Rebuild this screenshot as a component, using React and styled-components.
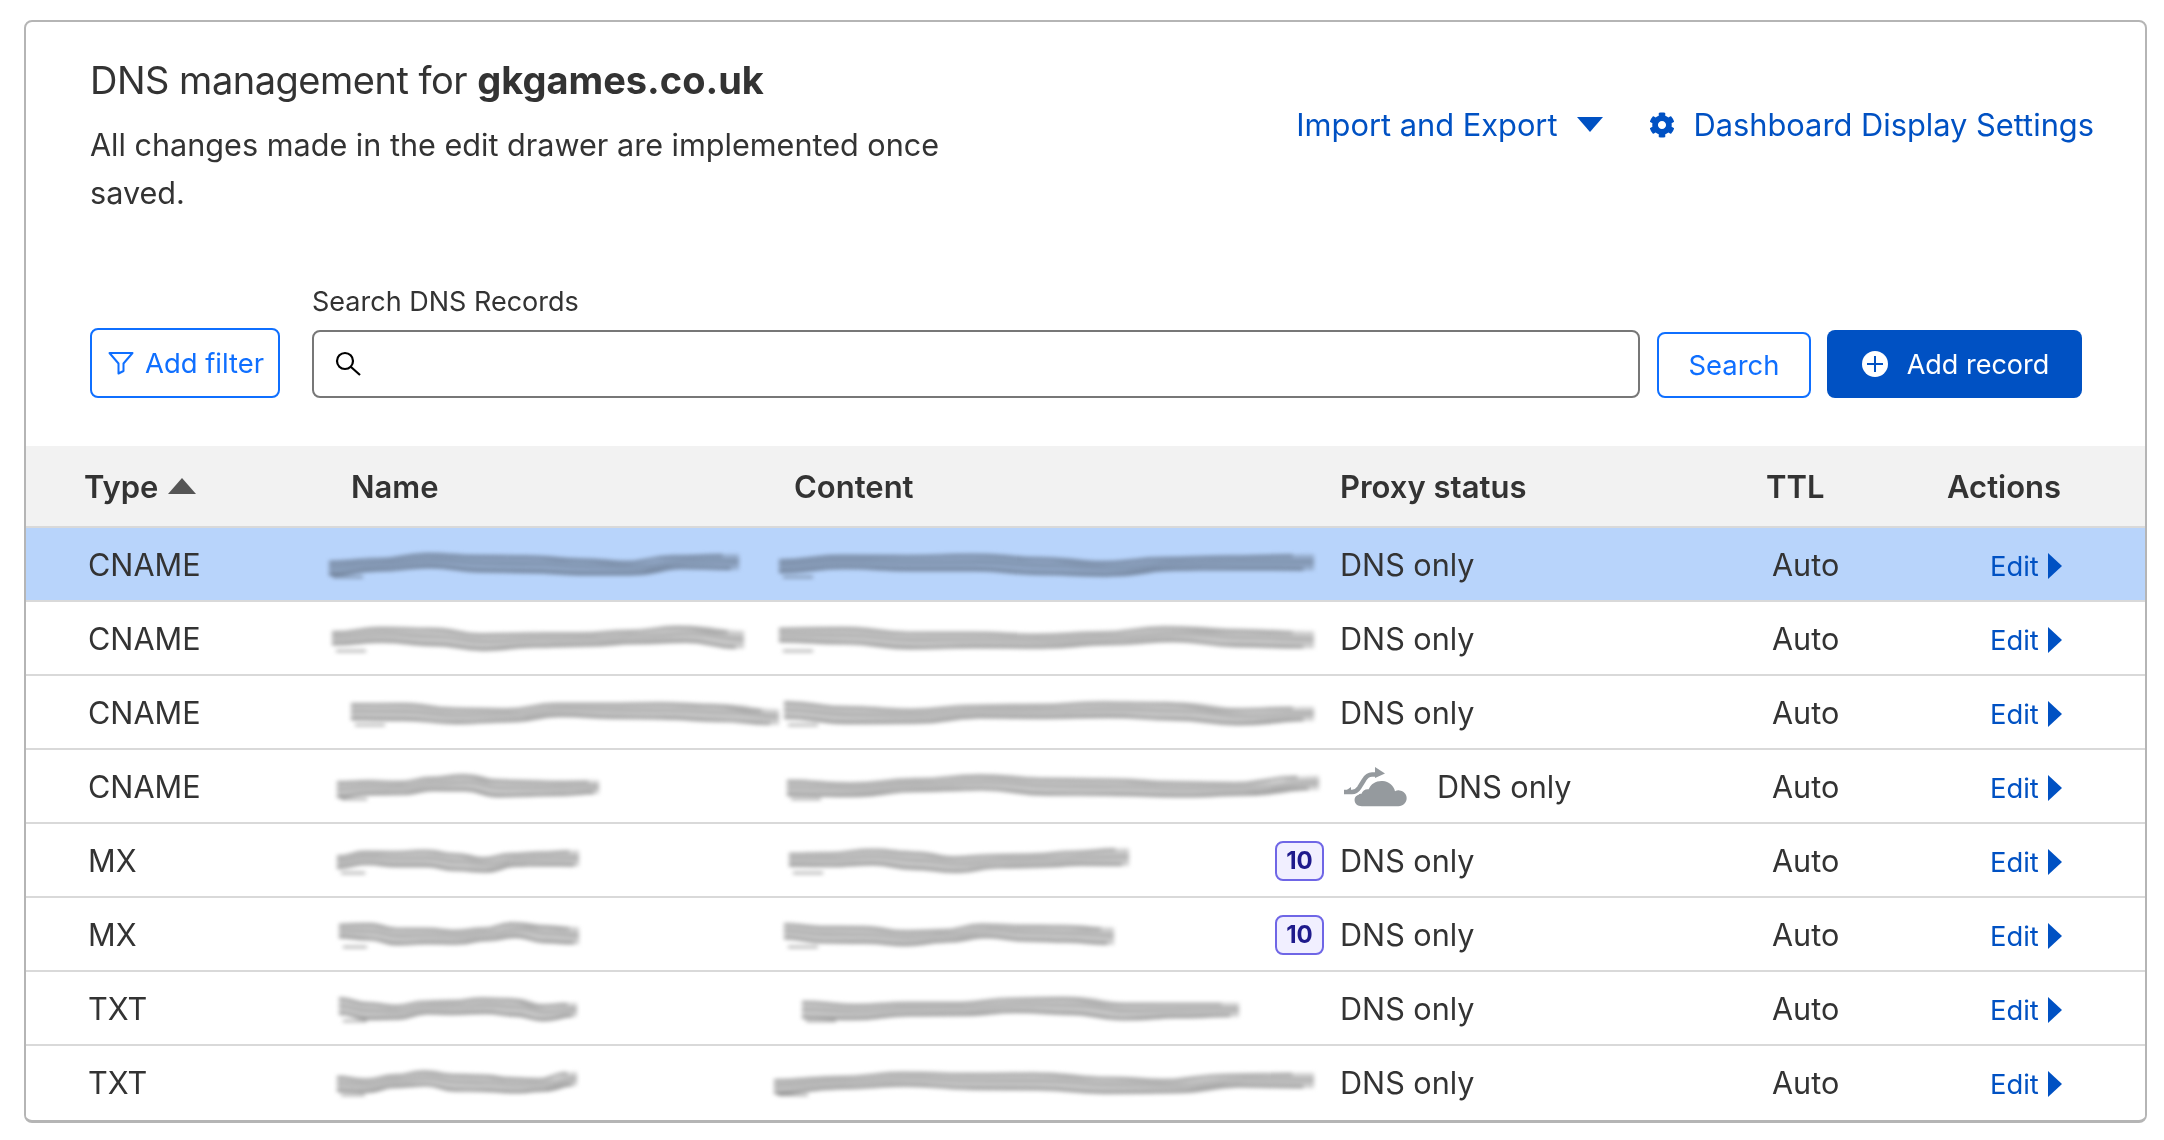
import styled, { createGlobalStyle } from "styled-components";
import { FaCog } from "react-icons/fa";

const GlobalStyle = createGlobalStyle`
    body {
        margin: 0;
        background: #fff;
        font-family: Inter, "Liberation Sans", sans-serif;
        color: #333;
    }
`;

const COLUMNS = "303px 445px 566px 426px 181px 1fr";

// redacted values: [name offset, name width, content offset, content width]
const records = [
    { type: "CNAME", name: [0, 410], content: [5, 535], active: true },
    { type: "CNAME", name: [3, 412], content: [5, 535] },
    { type: "CNAME", name: [22, 428], content: [10, 530] },
    { type: "CNAME", name: [8, 262], content: [13, 532], cloud: true },
    { type: "MX", name: [8, 242], content: [15, 340], priority: 10 },
    { type: "MX", name: [10, 240], content: [10, 330], priority: 10 },
    { type: "TXT", name: [10, 238], content: [28, 437] },
    { type: "TXT", name: [8, 240], content: [0, 540] },
];

const bump = (i, seed, amp) => Math.sin(seed * 1.7 + i * 1.1) * amp + Math.sin(seed * 0.6 + i * 2.3) * amp * 0.5;

// points of one wavy line across the smear
const wavePoints = (width, y, seed, amp) => {
    const count = 8;
    const points = [];
    for (let i = 0; i <= count; i++) {
        points.push([(i * width) / count, y + bump(i, seed, amp)]);
    }
    return points;
};

const curve = (points) =>
    points
        .slice(1)
        .map((p, i) => {
            const prev = points[i];
            const mid = (prev[0] + p[0]) / 2;
            return `C${mid.toFixed(1)} ${prev[1].toFixed(1)} ${mid.toFixed(1)} ${p[1].toFixed(1)} ${p[0].toFixed(1)} ${p[1].toFixed(1)}`;
        })
        .join(" ");

const line = (width, y, seed, amp) => {
    const points = wavePoints(width, y, seed, amp);
    return `M${points[0][0]} ${points[0][1].toFixed(1)} ${curve(points)}`;
};

const band = (width, seed) => {
    const top = wavePoints(width, 8, seed, 3.2);
    const bottom = wavePoints(width, 23, seed + 0.4, 3.2).reverse();
    return `M${top[0][0]} ${top[0][1].toFixed(1)} ${curve(top)} L${bottom[0][0]} ${bottom[0][1].toFixed(1)} ${curve(bottom)} Z`;
};

const Smear = ({ offset, width, seed }) => (
    <SmearSvg $offset={offset} width={width} height="32" viewBox={`0 0 ${width} 32`}>
        <path d={band(width, seed)} fill="#c9c9c9" />
        <path d={line(width * 0.96, 9, seed, 3.2)} stroke="#8f8f8f" strokeWidth="2.200" fill="none" />
        <path d={line(width, 15, seed + 0.2, 3)} stroke="#a6a6a6" strokeWidth="2.600" fill="none" />
        <path d={line(width * 0.98, 22, seed + 0.4, 3.2)} stroke="#7f7f7f" strokeWidth="2.200" fill="none" />
        <path d={`M4 28h${Math.min(width * 0.1, 30)}`} stroke="#999" strokeWidth="2" fill="none" />
    </SmearSvg>
);

const ProxyCloud = () => (
    <CloudSvg width="64" height="42" viewBox="0 0 64 42">
        <path
            transform="translate(-1.3 -1) scale(1.12 1.03)"
            d="M18 40c-4 0-6.500-2.600-6.500-6 0-3.400 2.800-6 6.200-6 .8-3 3.400-5 6.400-4.500 2-5.500 7-8.500 12.500-8 5.500.5 10 4.800 11 10 1.200-.8 2.800-1 4-.8 3.600.5 6.400 3.500 6.400 7.300 0 4.400-3 8-7.400 8z"
            fill="#959a9e"
        />
        <path d="M1 26h8c3 0 5-1 7-4l5-8c2-3.500 4-5.500 8-5.500h5" stroke="#fff" strokeWidth="9" fill="none" />
        <path d="M1 26h8c3 0 5-1 7-4l5-8c2-3.500 4-5.500 8-5.500h5" stroke="#959a9e" strokeWidth="4.500" fill="none" />
        <path d="M1 26l7-5v5zM32 1l10 6.500-10 4.500z" fill="#959a9e" />
    </CloudSvg>
);

const App = () => {
    return (
        <>
            <GlobalStyle />
            <Card>
                <Header>
                    <div>
                        <Title>DNS management for <strong>gkgames.co.uk</strong></Title>
                        <Intro>All changes made in the edit drawer are implemented once saved.</Intro>
                    </div>
                    <Links>
                        <HeadLink $gap={19}>
                            Import and Export
                            <svg width="26" height="16" viewBox="0 0 26 16"><path d="M0 0h26L13 15z" fill="#0051c3" /></svg>
                        </HeadLink>
                        <HeadLink $gap={19}>
                            <FaCog size={26} color="#0051c3" />
                            Dashboard Display Settings
                        </HeadLink>
                    </Links>
                </Header>

                <Toolbar>
                    <OutlineButton $width={190} $height={70} $nudge>
                        <svg width="26" height="24" viewBox="0 0 26 24">
                            <path d="M1.500 2h23L15.500 12.500V20l-5 2.500V12.500z" stroke="#0f6fff" strokeWidth="2" fill="none" strokeLinejoin="round" />
                        </svg>
                        Add filter
                    </OutlineButton>
                    <SearchField>
                        <SearchLabel>Search DNS Records</SearchLabel>
                        <SearchBox>
                            <svg width="28" height="28" viewBox="0 0 28 28">
                                <circle cx="11" cy="11" r="8" stroke="#000" strokeWidth="2.200" fill="none" />
                                <path d="M17 17l9 8" stroke="#000" strokeWidth="2.200" />
                            </svg>
                        </SearchBox>
                    </SearchField>
                    <OutlineButton $width={154} $height={66}>Search</OutlineButton>
                    <PrimaryButton>
                        <svg width="26" height="26" viewBox="0 0 26 26">
                            <circle cx="13" cy="13" r="13" fill="#fff" />
                            <path d="M13 5v16M5 13h16" stroke="#0051c3" strokeWidth="2" />
                        </svg>
                        Add record
                    </PrimaryButton>
                </Toolbar>

                <HeadRow>
                    <HeadCell $pad={58}>
                        Type
                        <svg width="28" height="16" viewBox="0 0 28 16"><path d="M14 0l14 16H0z" fill="#555" /></svg>
                    </HeadCell>
                    <HeadCell $pad={22}>Name</HeadCell>
                    <HeadCell $pad={20}>Content</HeadCell>
                    <HeadCell>Proxy status</HeadCell>
                    <HeadCell>TTL</HeadCell>
                    <HeadCell>Actions</HeadCell>
                </HeadRow>

                {records.map((record, index) => (
                    <Row key={index} $active={record.active}>
                        <Cell $pad={62}>{record.type}</Cell>
                        <Cell>
                            <Smear offset={record.name[0]} width={record.name[1]} seed={index + 1} />
                        </Cell>
                        <ContentCell>
                            <Smear offset={record.content[0]} width={record.content[1]} seed={index + 5} />
                            {record.priority && <Priority>{record.priority}</Priority>}
                        </ContentCell>
                        <Cell>
                            {record.cloud && <ProxyCloud />}
                            DNS only
                        </Cell>
                        <Cell $pad={6}>Auto</Cell>
                        <Cell $pad={43}>
                            <EditLink>
                                Edit
                                <svg width="14" height="26" viewBox="0 0 14 26"><path d="M0 0l14 13L0 26z" fill="#0051c3" /></svg>
                            </EditLink>
                        </Cell>
                    </Row>
                ))}
            </Card>
        </>
    );
};

const Card = styled.div`
    box-sizing: border-box;
    width: 2123px;
    height: 1103px;
    margin: 20px 0 0 24px;
    border: 2px solid #b5b5b5;
    border-bottom-width: 3px;
    border-radius: 8px;
    overflow: hidden;
`;

const Header = styled.div`
    display: flex;
    justify-content: space-between;
    align-items: flex-start;
    padding: 34px 51px 0 64px;
`;

const Title = styled.h1`
    margin: 0 0 17px;
    font-size: 38px;
    font-weight: 400;
    line-height: 48px;
    letter-spacing: -0.5px;

    & strong {
        font-weight: 700;
        letter-spacing: 0;
    }
`;

const Intro = styled.p`
    margin: 0;
    width: 880px;
    font-size: 30.6px;
    line-height: 48px;
`;

const Links = styled.div`
    display: flex;
    align-items: center;
    gap: 46px;
    margin-top: 45px;
`;

const HeadLink = styled.a`
    display: flex;
    align-items: center;
    gap: ${(props) => props.$gap}px;
    color: #0051c3;
    font-size: 30.8px;
    line-height: 48px;
`;

const Toolbar = styled.div`
    display: flex;
    align-items: flex-end;
    margin-top: 68px;
    padding: 0 63px 48px 64px;
`;

const OutlineButton = styled.button`
    box-sizing: border-box;
    display: flex;
    align-items: center;
    justify-content: center;
    gap: 11px;
    width: ${(props) => props.$width}px;
    height: ${(props) => props.$height}px;
    padding: ${(props) => (props.$nudge ? "0 0 0 2px" : "0")};
    border: 2px solid #0f6fff;
    border-radius: 8px;
    background: #fff;
    color: #0f6fff;
    font-family: inherit;
    font-size: 27.4px;
`;

const SearchField = styled.div`
    flex: 1;
    margin: 0 17px 0 32px;
`;

const SearchLabel = styled.div`
    margin-bottom: 11px;
    font-size: 27px;
    line-height: 34px;
`;

const SearchBox = styled.div`
    box-sizing: border-box;
    display: flex;
    align-items: center;
    height: 68px;
    padding: 0 20px;
    border: 2px solid #777;
    border-radius: 8px;
`;

const PrimaryButton = styled.button`
    display: flex;
    align-items: center;
    justify-content: center;
    gap: 19px;
    width: 255px;
    height: 68px;
    margin-left: 16px;
    padding: 0 0 0 2px;
    border: none;
    border-radius: 8px;
    background: #0051c3;
    color: #fff;
    font-family: inherit;
    font-size: 27px;
`;

const HeadRow = styled.div`
    display: grid;
    grid-template-columns: ${COLUMNS};
    height: 80px;
    background: #f2f2f2;
`;

const HeadCell = styled.div`
    display: flex;
    align-items: center;
    gap: 10px;
    padding-left: ${(props) => props.$pad || 0}px;
    font-size: 31px;
    font-weight: 600;
`;

const Row = styled.div`
    box-sizing: border-box;
    display: grid;
    grid-template-columns: ${COLUMNS};
    height: 74px;
    padding-top: 1px;
    border-top: 2px solid #d9d9d9;
    background: ${(props) => (props.$active ? "#b8d4fb" : "#fff")};
`;

const Cell = styled.div`
    display: flex;
    align-items: center;
    padding-left: ${(props) => props.$pad || 0}px;
    font-size: 30.6px;
`;

const ContentCell = styled(Cell)`
    justify-content: space-between;
    padding-right: 16px;
`;

const SmearSvg = styled.svg`
    margin-left: ${(props) => props.$offset}px;
    flex-shrink: 0;
    overflow: visible;
    filter: blur(2.2px);
    mix-blend-mode: multiply;
`;

const CloudSvg = styled.svg`
    margin: 0 30px 0 3px;
`;

const Priority = styled.span`
    box-sizing: border-box;
    display: flex;
    align-items: center;
    justify-content: center;
    width: 49px;
    height: 40px;
    border: 2px solid #6f66e6;
    border-radius: 8px;
    background: #f1efff;
    color: #1f1a8c;
    font-size: 24px;
    font-weight: 700;
`;

const EditLink = styled.a`
    display: flex;
    align-items: center;
    gap: 9px;
    margin-top: 2px;
    color: #0051c3;
    font-size: 27.4px;
`;

export default App;
